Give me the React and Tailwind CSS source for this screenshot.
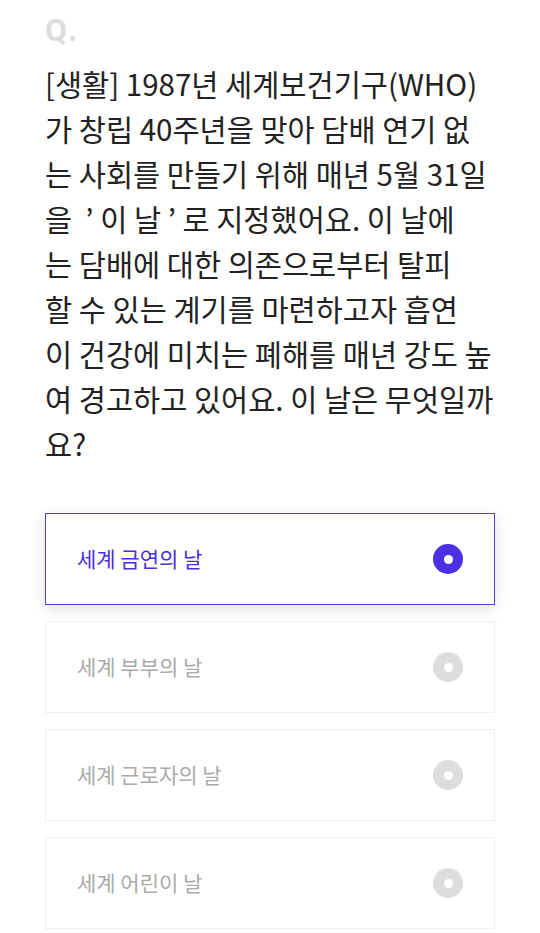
const lines = [
  "[생활] 1987년 세계보건기구(WHO)",
  "가 창립 40주년을 맞아 담배 연기 없",
  "는 사회를 만들기 위해 매년 5월 31일",
  "을  ’ 이 날 ’ 로 지정했어요. 이 날에",
  "는 담배에 대한 의존으로부터 탈피",
  "할 수 있는 계기를 마련하고자 흡연",
  "이 건강에 미치는 폐해를 매년 강도 높",
  "여 경고하고 있어요. 이 날은 무엇일까",
  "요?",
];

const options = [
  { label: "세계 금연의 날", selected: true },
  { label: "세계 부부의 날" },
  { label: "세계 근로자의 날" },
  { label: "세계 어린이 날" },
];

const Radio = ({ on }) => (
  <span
    className={`flex h-[30px] w-[30px] items-center justify-center rounded-full ${
      on ? "bg-[#4f2fe6]" : "bg-[#dddddd]"
    }`}
  >
    <span className="h-[9px] w-[9px] rounded-full bg-white" />
  </span>
);

export default function App() {
  return (
    <div
      className="min-h-screen bg-white px-[45px] pt-[13px]"
      style={{ fontFamily: '"Noto Sans CJK KR", "Noto Sans", sans-serif' }}
    >
      <div className="flex items-end text-[32px] font-bold leading-[34px] text-[#dddddd]">
        <span style={{ fontFamily: "Roboto, sans-serif" }}>Q</span>
        <span className="mb-[6px] ml-[3px] h-[5px] w-[5px] rounded-full bg-[#dddddd]" />
      </div>

      <div className="mt-[14px] text-[29.5px] leading-[45px] text-[#222222]">
        {lines.map((l, i) => (
          <div key={i} className="whitespace-pre">
            {l}
          </div>
        ))}
      </div>

      <div className="mt-[47px] flex flex-col gap-4">
        {options.map((o) => (
          <div
            key={o.label}
            className={`flex h-[92px] items-center justify-between bg-white pl-[31px] pr-[31px] ${
              o.selected
                ? "border border-[#5a3fd6] shadow-[0_4px_14px_rgba(0,0,0,0.12)]"
                : "border border-[#eeeeee]"
            }`}
          >
            <span
              className={`text-[21px] ${
                o.selected ? "text-[#4a2fd8]" : "text-[#aaaaaa]"
              }`}
            >
              {o.label}
            </span>
            <Radio on={o.selected} />
          </div>
        ))}
      </div>
    </div>
  );
}
